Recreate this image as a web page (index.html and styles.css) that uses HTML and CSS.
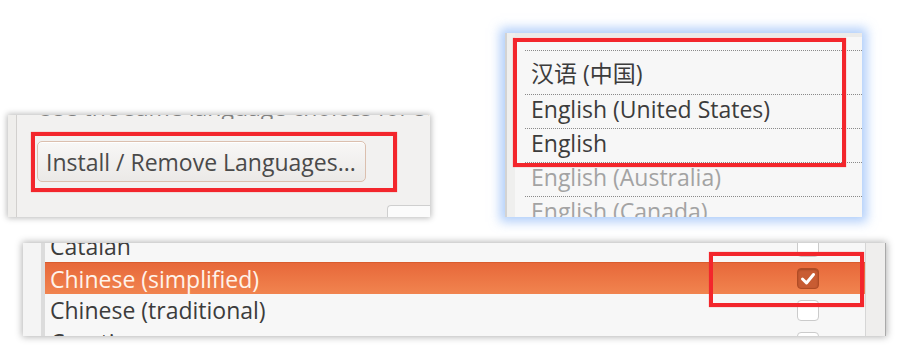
FILE: index.html
```html
<!DOCTYPE html>
<html lang="en">
<head>
<meta charset="utf-8">
<title>Language Support</title>
<link rel="stylesheet" href="styles.css">
</head>
<body>
<main class="canvas">
  <div class="top-row">
    <section class="panel settings">
      <div class="settings-body">
        <div class="cut-line"><span>Use the same language choices for startup</span></div>
        <button class="btn" type="button">Install / Remove Languages...</button>
        <div class="stub-row"><div class="stub"></div></div>
      </div>
      <div class="mark mark-btn"></div>
    </section>
    <section class="panel menu">
      <div class="menu-gutter"></div>
      <div class="menu-main">
        <div class="menu-head"></div>
        <ul class="menu-list">
          <li class="menu-item first">汉语 (中国)</li>
          <li class="menu-item">English (United States)</li>
          <li class="menu-item">English</li>
          <li class="menu-item muted">English (Australia)</li>
          <li class="menu-item muted">English (Canada)</li>
        </ul>
      </div>
      <div class="mark mark-menu"></div>
    </section>
  </div>
  <section class="panel langs">
    <div class="langs-gutter"></div>
    <div class="langs-view">
      <ul class="langs-list">
        <li class="lang-row"><span class="lang-name">Catalan</span><span class="check"></span></li>
        <li class="lang-row selected"><span class="lang-name">Chinese (simplified)</span><span class="check checked"><svg viewBox="0 0 22 21" width="22" height="21"><path d="M5.5 11 L9.5 15 L16.5 6.5" fill="none" stroke="#ffffff" stroke-width="3" stroke-linecap="round" stroke-linejoin="round"/></svg></span></li>
        <li class="lang-row"><span class="lang-name">Chinese (traditional)</span><span class="check"></span></li>
        <li class="lang-row"><span class="lang-name">Croatian</span><span class="check"></span></li>
      </ul>
    </div>
    <div class="langs-scroll"></div>
    <div class="mark mark-check"></div>
  </section>
</main>
</body>
</html>
```

FILE: styles.css
```css
* { box-sizing: border-box; }
html, body { margin: 0; padding: 0; background: #ffffff; }
body {
  width: 906px;
  height: 357px;
  overflow: hidden;
  font-family: "Open Sans", "Noto Sans CJK SC", sans-serif;
  color: #3c3c3c;
}
ul { list-style: none; margin: 0; padding: 0; }

.canvas { padding-top: 33px; }
.top-row { display: flex; align-items: flex-start; height: 184px; }
.panel { position: relative; }

/* Panel 1: settings with button */
.settings {
  margin-left: 8px;
  margin-top: 82px;
  width: 422px;
  height: 102px;
  padding-left: 8px;
  background: #efeeec;
  box-shadow: 0 0 6px 1px rgba(0, 0, 0, 0.28);
  display: flex;
}
.settings-body {
  flex: 1;
  display: flex;
  flex-direction: column;
  align-items: flex-start;
  background: #f2f1f0;
  border-left: 1px solid #d2d0ce;
}
.cut-line {
  height: 4px;
  overflow: hidden;
  margin-left: 20px;
  width: 392px;
}
.cut-line span {
  display: block;
  font-size: 23px;
  line-height: 26px;
  white-space: nowrap;
  margin-top: -21px;
  color: #808080;
}
.btn {
  margin: 22px 0 0 20px;
  width: 329px;
  height: 41px;
  padding: 0 0 0 8px;
  border: 1px solid #dbbfae;
  border-radius: 5px;
  background: linear-gradient(#f8f7f6, #ebe9e7);
  box-shadow: inset 0 1px 0 #ffffff;
  font-family: inherit;
  font-size: 23px;
  color: #4a4a4a;
  text-align: left;
  display: flex;
  align-items: center;
}
.stub-row { margin-top: auto; align-self: stretch; display: flex; justify-content: flex-end; }
.stub {
  width: 43px;
  height: 12px;
  background: #fbfbfb;
  border-top: 1px solid #cfcfcf;
  border-left: 1px solid #cfcfcf;
  border-top-left-radius: 4px;
}

/* Panel 2: language menu */
.menu {
  margin-left: 75px;
  width: 357px;
  height: 184px;
  display: flex;
  background: #f7f7f7;
  box-shadow: 0 0 10px 5px rgba(115, 168, 245, 0.55);
}
.menu-gutter {
  width: 10px;
  background: #efefee;
  border-left: 2px solid #d3d3d3;
}
.menu-main { flex: 1; overflow: hidden; }
.menu-head { height: 4px; background: #ebebea; }
.menu-list { padding: 13px 0 0 10px; }
.menu-item {
  border-top: 1px dotted #8a8a8a;
  height: 34px;
  padding: 1px 0 0 6px;
  font-size: 23px;
  line-height: 26px;
  color: #3c3c3c;
  white-space: nowrap;
}
.menu-item.first { height: 44px; padding-top: 9px; }
.menu-item.muted { color: #a3a3a3; }

/* Panel 3: language list with checkboxes */
.langs {
  margin-left: 23px;
  margin-top: 26px;
  width: 863px;
  height: 93px;
  display: flex;
  background: #f7f7f7;
  box-shadow: 0 0 7px 1px rgba(0, 0, 0, 0.3);
}
.langs-gutter {
  width: 22px;
  background: #f4f4f4;
  border-right: 4px solid #dcdcdc;
}
.langs-view { flex: 1; overflow: hidden; }
.langs-list { margin-top: -13px; }
.lang-row {
  height: 32px;
  display: flex;
  align-items: center;
  padding-right: 46px;
}
.lang-name {
  flex: 1;
  padding: 2px 0 1px 5px;
  font-size: 23px;
  line-height: 29px;
  color: #3c3c3c;
  white-space: nowrap;
}
.lang-row.selected {
  background: linear-gradient(#e7683a, #f1844f);
  border-top: 1px solid #d95c2e;
}
.lang-row.selected .lang-name { color: #fff3ea; }
.check {
  width: 22px;
  height: 21px;
  border: 1px solid #cbcbcb;
  border-radius: 4px;
  background: #ffffff;
  display: flex;
  align-items: center;
  justify-content: center;
}
.check.checked {
  background: #c85c33;
  border-color: #b04c25;
  box-shadow: inset 0 1px 2px rgba(90, 30, 10, 0.35);
}
.check.checked svg { display: block; margin: -1px; }
.langs-scroll {
  width: 21px;
  background: #efeeed;
  border-left: 1px solid #d6d6d6;
  border-right: 1px solid #a9a9a9;
}

/* Red highlight frames */
.mark {
  position: absolute;
  border: 4px solid #f3262c;
  box-shadow: 0 0 1px rgba(240, 40, 40, 0.6);
  pointer-events: none;
}
.mark-btn { left: 23px; top: 17px; width: 366px; height: 60px; }
.mark-menu { left: 8px; top: 5px; width: 333px; height: 129px; }
.mark-check { left: 686px; top: 9px; width: 155px; height: 55px; }
```
